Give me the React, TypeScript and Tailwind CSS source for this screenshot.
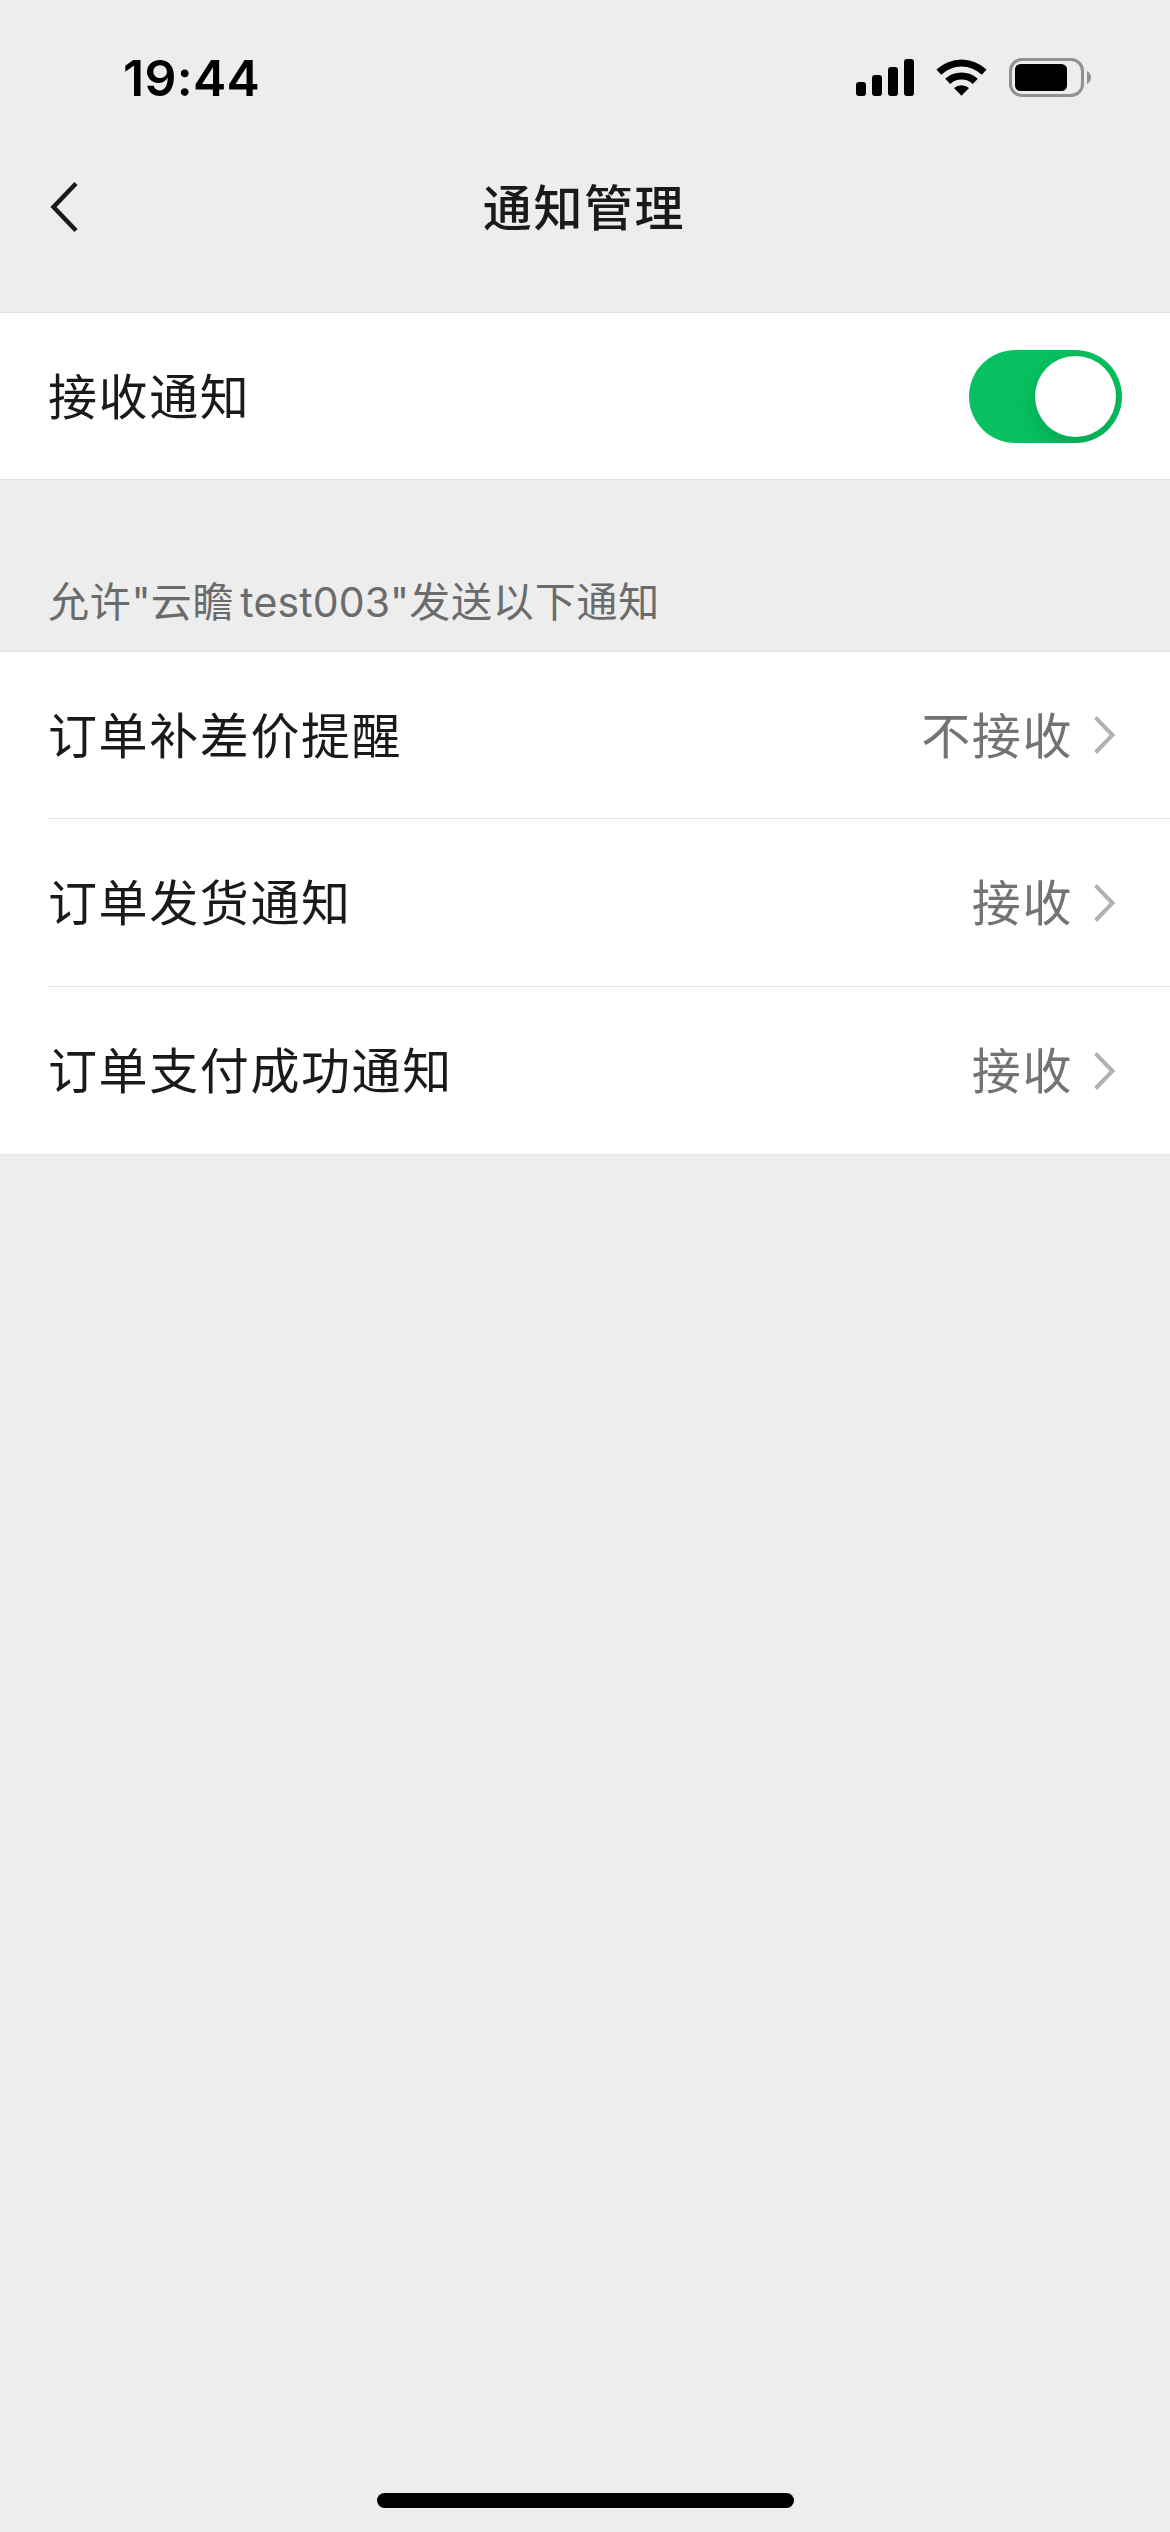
import { useState } from 'react';

type NoticeItem = {
  name: string;
  status: string;
};

const notices: NoticeItem[] = [
  { name: '订单补差价提醒', status: '不接收' },
  { name: '订单发货通知', status: '接收' },
  { name: '订单支付成功通知', status: '接收' },
];

function StatusBar() {
  return (
    <div className="flex h-[141px] items-start justify-between pt-[52px] pr-[78px] pl-[123px]">
      <span className="font-['Inter'] text-[50px] leading-[52px] font-semibold tracking-[0.300px] text-black">19:44</span>
      <div className="flex items-start pt-[6px]">
        <svg className="mt-px mr-[22px] h-[37px] w-[58px]" viewBox="0 0 58 37">
          <rect x="0" y="23" width="10" height="14" rx="3" />
          <rect x="16" y="16" width="10" height="21" rx="3" />
          <rect x="32" y="8" width="10" height="29" rx="3" />
          <rect x="48" y="0" width="10" height="37" rx="3" />
        </svg>
        <svg className="mt-px mr-[21px] h-[37px] w-[52px]" viewBox="0 0 52 37">
          <path d="M0.4 10.6 A36.500 36.500 0 0 1 50.600 10.600 L45.800 15.700 A29.500 29.500 0 0 0 5.200 15.700 Z" />
          <path d="M9.2 19.800 A24 24 0 0 1 41.800 19.800 L36.800 24.900 A16.800 16.800 0 0 0 14.200 24.900 Z" />
          <path d="M18 29 A11.500 11.500 0 0 1 33 29 L25.500 36.800 Z" />
        </svg>
        <svg className="h-[39px] w-[83px]" viewBox="0 0 83 39">
          <rect x="1.5" y="1.5" width="72" height="36" rx="11.5" fill="none" stroke="#919191" strokeWidth="3" />
          <rect x="6" y="6" width="52" height="27" rx="5.5" />
          <path d="M78 13 C80.600 14.500 82 16.800 82 19.500 C82 22.200 80.600 24.500 78 26 Z" fill="#919191" />
        </svg>
      </div>
    </div>
  );
}

function NavBar() {
  return (
    <div className="grid h-[132px] grid-cols-[1fr_auto_1fr] items-center px-[48px]">
      <svg className="h-[54px] w-[32px]" viewBox="0 0 32 54" fill="none" stroke="#1a1a1a" strokeWidth="4.5">
        <path d="M28 3.500 L5.500 27 L28 50.500" />
      </svg>
      <h1 className="mr-[2px] mb-[4px] text-[49px] leading-[60px] font-medium tracking-[1.600px]">通知管理</h1>
    </div>
  );
}

function Toggle({ on, onChange }: { on: boolean; onChange: () => void }) {
  return (
    <button
      type="button"
      role="switch"
      aria-checked={on}
      onClick={onChange}
      className={`flex h-[93px] w-[153px] items-center overflow-hidden rounded-full px-[6px] ${on ? 'justify-end bg-[#07c160]' : 'justify-start bg-[#e5e5e5]'}`}
    >
      <span className="size-[81px] rounded-full bg-white shadow-[0_9px_24px_rgba(0,0,0,0.15)]" />
    </button>
  );
}

function ArrowRight() {
  return (
    <svg className="ml-[19px] h-[42px] w-[24px]" viewBox="0 0 24 42" fill="none" stroke="#b2b2b2" strokeWidth="4">
      <path d="M3.500 3.500 L20.500 21 L3.500 38.500" />
    </svg>
  );
}

function NoticeRow({ item, last }: { item: NoticeItem; last: boolean }) {
  return (
    <div className="group ml-[48px]">
      <div className="flex h-[167px] items-center pr-[54px] group-first:h-[166px]">
        <span className="mb-[5px] flex-1 text-[49px] leading-[60px] tracking-[1.600px]">{item.name}</span>
        <span className="mb-[5px] text-[49px] leading-[60px] tracking-[1.600px] text-[#737373]">{item.status}</span>
        <ArrowRight />
      </div>
      {!last && <div className="h-px bg-[#e3e3e3]" />}
    </div>
  );
}

function App() {
  const [enabled, setEnabled] = useState(true);

  return (
    <div className="flex h-[2532px] w-[1170px] flex-col bg-[#ededed] font-['Noto_Sans_CJK_SC',sans-serif] text-[#1a1a1a]">
      <StatusBar />
      <NavBar />

      <div className="mt-[39px] flex h-[168px] items-center justify-between border-y border-[#e3e3e3] bg-white px-[48px]">
        <span className="mb-[4px] text-[49px] leading-[60px] tracking-[1.600px]">接收通知</span>
        <Toggle on={enabled} onChange={() => setEnabled(!enabled)} />
      </div>

      <div className="flex h-[171px] items-end px-[48px] pb-[24px]">
        <p className="text-[41px] leading-[50px] tracking-[0.800px] text-[#6b6b6b]">
          允许<span className="font-['Inter'] tracking-normal">"</span>云瞻
          <span className="ml-[6px] font-['Inter'] tracking-[0.100px]">test003"</span>发送以下通知
        </p>
      </div>

      <div className="border-y border-[#e3e3e3] bg-white">
        {notices.map((item, i) => (
          <NoticeRow key={item.name} item={item} last={i === notices.length - 1} />
        ))}
      </div>

      {/* Home indicator */}
      <div className="mx-auto mt-auto mb-[24px] h-[15px] w-[417px] rounded-full bg-black" />
    </div>
  );
}

export default App;
